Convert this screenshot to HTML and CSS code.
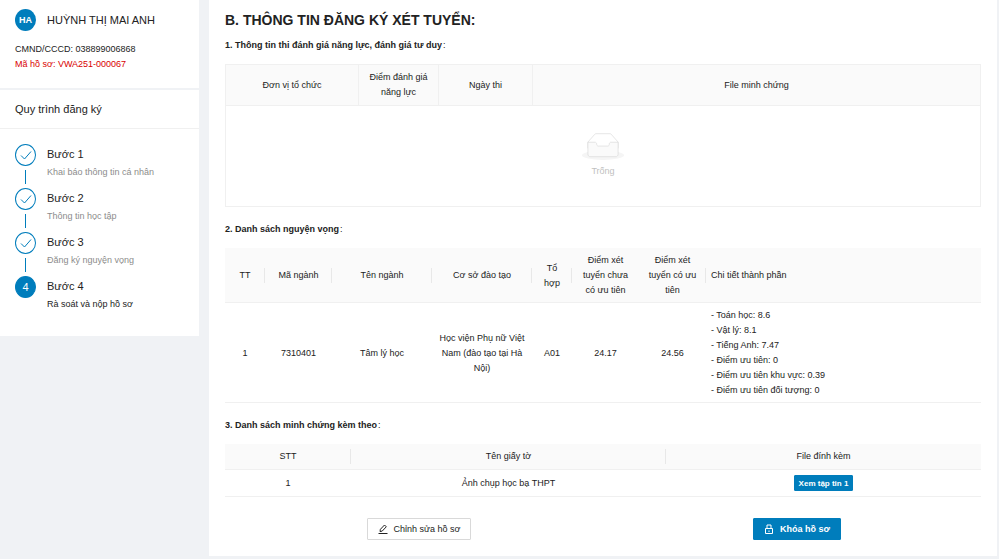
FILE: index.html
```html
<!DOCTYPE html>
<html lang="vi">
<head>
    <meta charset="UTF-8">
    <meta name="viewport" content="width=device-width, initial-scale=1.0">
    <title>Thông tin đăng ký xét tuyển</title>
    <link rel="stylesheet" href="styles.css">
</head>
<body>
    <div class="layout">
        <aside class="sidebar">
            <div class="profile">
                <div class="profile-name">
                    <span class="avatar">HA</span>
                    <span>HUỲNH THỊ MAI ANH</span>
                </div>
                <p class="profile-id">CMND/CCCD: 038899006868</p>
                <p class="profile-code">Mã hồ sơ: VWA251-000067</p>
            </div>

            <div class="progress">
                <h2 class="progress-title">Quy trình đăng ký</h2>
                <ol class="steps">
                    <li class="step">
                        <span class="step-icon">
                            <svg viewBox="0 0 12 12" width="12" height="12"><path d="M1 6.5 4.5 10 11 2.5"/></svg>
                        </span>
                        <div>
                            <h3>Bước 1</h3>
                            <p>Khai báo thông tin cá nhân</p>
                        </div>
                    </li>
                    <li class="step">
                        <span class="step-icon">
                            <svg viewBox="0 0 12 12" width="12" height="12"><path d="M1 6.5 4.5 10 11 2.5"/></svg>
                        </span>
                        <div>
                            <h3>Bước 2</h3>
                            <p>Thông tin học tập</p>
                        </div>
                    </li>
                    <li class="step">
                        <span class="step-icon">
                            <svg viewBox="0 0 12 12" width="12" height="12"><path d="M1 6.5 4.5 10 11 2.5"/></svg>
                        </span>
                        <div>
                            <h3>Bước 3</h3>
                            <p>Đăng ký nguyện vọng</p>
                        </div>
                    </li>
                    <li class="step active">
                        <span class="step-icon">4</span>
                        <div>
                            <h3>Bước 4</h3>
                            <p>Rà soát và nộp hồ sơ</p>
                        </div>
                    </li>
                </ol>
            </div>
        </aside>

        <main class="content">
            <h1>B. THÔNG TIN ĐĂNG KÝ XÉT TUYỂN:</h1>

            <section>
                <h2 class="section-title"><b>1. Thông tin thi đánh giá năng lực, đánh giá tư duy</b>:</h2>
                <table class="table bordered">
                    <colgroup>
                        <col class="w-133">
                        <col class="w-80">
                        <col class="w-94">
                        <col>
                    </colgroup>
                    <thead>
                        <tr>
                            <th>Đơn vị tổ chức</th>
                            <th>Điểm đánh giá năng lực</th>
                            <th>Ngày thi</th>
                            <th>File minh chứng</th>
                        </tr>
                    </thead>
                    <tbody>
                        <tr>
                            <td colspan="4" class="empty">
                                <svg viewBox="0 0 64 41" width="42" height="27">
                                    <ellipse cx="32" cy="34" rx="32" ry="7" fill="#f5f5f5"/>
                                    <g fill="none" stroke="#d9d9d9" transform="translate(0 1)">
                                        <path d="M55 12.76 44.854 1.258C44.367.474 43.656 0 42.907 0H21.093c-.749 0-1.46.474-1.947 1.257L9 12.761V22h46v-9.24z" fill="#fff"/>
                                        <path d="M41.613 15.931c0-1.605.994-2.93 2.227-2.931H55v18.137C55 33.26 53.68 35 52.05 35h-40.1C10.32 35 9 33.259 9 31.137V13h11.16c1.233 0 2.227 1.323 2.227 2.928v.022c0 1.605 1.005 2.901 2.237 2.901h14.752c1.232 0 2.237-1.308 2.237-2.913v-.007z" fill="#fafafa"/>
                                    </g>
                                </svg>
                                <p>Trống</p>
                            </td>
                        </tr>
                    </tbody>
                </table>
            </section>

            <section>
                <h2 class="section-title"><b>2. Danh sách nguyện vọng</b>:</h2>
                <table class="table lined wishes">
                    <colgroup>
                        <col class="w-40">
                        <col class="w-67">
                        <col class="w-100">
                        <col class="w-100">
                        <col class="w-40">
                        <col class="w-67">
                        <col class="w-67">
                        <col>
                    </colgroup>
                    <thead>
                        <tr>
                            <th>TT</th>
                            <th>Mã ngành</th>
                            <th>Tên ngành</th>
                            <th>Cơ sở đào tạo</th>
                            <th>Tổ<br>hợp</th>
                            <th class="no-line">Điểm xét tuyển chưa có ưu tiên</th>
                            <th>Điểm xét tuyển có ưu tiên</th>
                            <th class="left">Chi tiết thành phần</th>
                        </tr>
                    </thead>
                    <tbody>
                        <tr>
                            <td>1</td>
                            <td>7310401</td>
                            <td>Tâm lý học</td>
                            <td>Học viện Phụ nữ Việt Nam (đào tạo tại Hà Nội)</td>
                            <td>A01</td>
                            <td>24.17</td>
                            <td>24.56</td>
                            <td class="left">
                                - Toán học: 8.6<br>
                                - Vật lý: 8.1<br>
                                - Tiếng Anh: 7.47<br>
                                - Điểm ưu tiên: 0<br>
                                - Điểm ưu tiên khu vực: 0.39<br>
                                - Điểm ưu tiên đối tượng: 0
                            </td>
                        </tr>
                    </tbody>
                </table>
            </section>

            <section>
                <h2 class="section-title"><b>3. Danh sách minh chứng kèm theo</b>:</h2>
                <table class="table lined">
                    <colgroup>
                        <col class="w-sixth">
                        <col>
                        <col>
                    </colgroup>
                    <thead>
                        <tr>
                            <th>STT</th>
                            <th>Tên giấy tờ</th>
                            <th>File đính kèm</th>
                        </tr>
                    </thead>
                    <tbody>
                        <tr>
                            <td>1</td>
                            <td>Ảnh chụp học bạ THPT</td>
                            <td><button type="button" class="btn-file">Xem tập tin 1</button></td>
                        </tr>
                    </tbody>
                </table>
            </section>

            <div class="actions">
                <button type="button" class="btn">
                    <svg viewBox="0 0 10 10" width="10" height="10"><path d="M.5 9.500h9M2 7.500l.4-2.200L6.500 1l1.800 1.800L4.200 7.100z"/></svg>
                    Chỉnh sửa hồ sơ
                </button>
                <button type="button" class="btn btn-primary">
                    <svg viewBox="0 0 10 10" width="10" height="10"><path d="M1.500 4.500h7v5h-7zM3 4.500V1h4v3.500M5 6.500v1.500"/></svg>
                    Khóa hồ sơ
                </button>
            </div>
        </main>
    </div>
</body>
</html>
```

FILE: styles.css
```css
* {
    box-sizing: border-box;
}

body {
    margin: 0;
    background-color: #f0f2f5;
    color: #222;
    font-family: "Liberation Sans", Arial, sans-serif;
    font-size: 9px;
    line-height: 15px;
}

h1, h2, h3, p, ol {
    margin: 0;
    padding: 0;
}

.layout {
    display: flex;
    align-items: flex-start;
    gap: 10px;
    padding-right: 2px;
}

/* sidebar */
.sidebar {
    flex: 0 0 199px;
}

.profile,
.progress {
    background-color: #fff;
}

.profile {
    padding: 9px 15px 16px;
    margin-bottom: 2px;
}

.profile-name {
    display: flex;
    align-items: center;
    gap: 11px;
    margin-bottom: 11px;
    font-size: 11px;
}

.avatar {
    width: 21px;
    height: 22px;
    border-radius: 50%;
    background-color: #007dbc;
    color: #fff;
    font-size: 9px;
    font-weight: bold;
    line-height: 22px;
    text-align: center;
}

.profile-code {
    color: #d90000;
}

.progress-title {
    padding: 11px 15px;
    border-bottom: 1px solid #f0f0f0;
    font-size: 11px;
    font-weight: normal;
    line-height: 16px;
}

.steps {
    list-style: none;
    padding: 15px 15px 16px;
}

.step {
    display: flex;
    gap: 11px;
    height: 44px;
    color: #8c8c8c;
}

.step-icon {
    position: relative;
    display: flex;
    align-items: center;
    justify-content: center;
    width: 21px;
    height: 22px;
    border: 1px solid #007dbc;
    border-radius: 50%;
    font-size: 11px;
}

.step-icon svg {
    fill: none;
    stroke: #007dbc;
}

/* line down to the next step */
.step:not(:last-child) .step-icon::after {
    content: "";
    position: absolute;
    top: 25px;
    left: 9px;
    width: 1px;
    height: 14px;
    background-color: #007dbc;
}

.step h3 {
    color: #222;
    font-size: 11px;
    font-weight: normal;
    line-height: 21px;
}

.step.active {
    color: #222;
}

.step.active .step-icon {
    background-color: #007dbc;
    color: #fff;
}

/* content */
.content {
    flex: 1;
    min-width: 0;
    padding: 10px 16px 16px;
    background-color: #fff;
}

h1 {
    font-size: 14px;
    line-height: 20px;
}

.section-title {
    padding: 8px 0 11px;
    font-size: 9px;
    font-weight: normal;
}

.section-title b {
    margin-right: 1px;
}

.table {
    width: 100%;
    margin-bottom: 7px;
    border-collapse: collapse;
    table-layout: fixed;
}

.table th,
.table td {
    padding: 5px;
    font-weight: normal;
    text-align: center;
}

.table th {
    background-color: #fafafa;
}

.table .left {
    text-align: left;
}

.bordered th,
.bordered td {
    border: 1px solid #f0f0f0;
}

.lined th,
.lined td {
    border-bottom: 1px solid #f0f0f0;
}

.lined th:not(:last-child) {
    background-image: linear-gradient(#e8e8e8, #e8e8e8);
    background-position: right center;
    background-repeat: no-repeat;
    background-size: 1px 15px;
}

.lined th.no-line {
    background-image: none;
}

.wishes th,
.wishes td {
    padding: 5px 5px 4px;
}

.w-40 {
    width: 40px;
}

.w-67 {
    width: 67px;
}

.w-80 {
    width: 80px;
}

.w-94 {
    width: 94px;
}

.w-100 {
    width: 100px;
}

.w-133 {
    width: 133px;
}

.w-sixth {
    width: 16.6667%;
}

.table .empty {
    padding: 27px 5px;
    color: #bfbfbf;
}

.empty svg {
    display: block;
    margin: 0 auto 4px;
}

/* buttons */
button {
    border: 1px solid #d9d9d9;
    border-radius: 1px;
    background-color: #fff;
    color: #222;
    font-family: inherit;
    cursor: pointer;
}

.btn-file {
    height: 16px;
    padding: 0 4px;
    border-color: #007dbc;
    background-color: #007dbc;
    color: #fff;
    font-size: 8px;
    font-weight: bold;
    vertical-align: top;
}

.actions {
    display: grid;
    grid-template-columns: 1fr 1fr;
    justify-items: center;
    margin-top: 21px;
}

.btn {
    display: flex;
    align-items: center;
    gap: 6px;
    height: 22px;
    margin-left: 10px;
    padding: 0 10px;
    font-size: 9px;
}

.btn svg {
    fill: none;
    stroke: currentColor;
}

.btn-primary {
    border-color: #007dbc;
    background-color: #007dbc;
    color: #fff;
    font-weight: bold;
}
```
